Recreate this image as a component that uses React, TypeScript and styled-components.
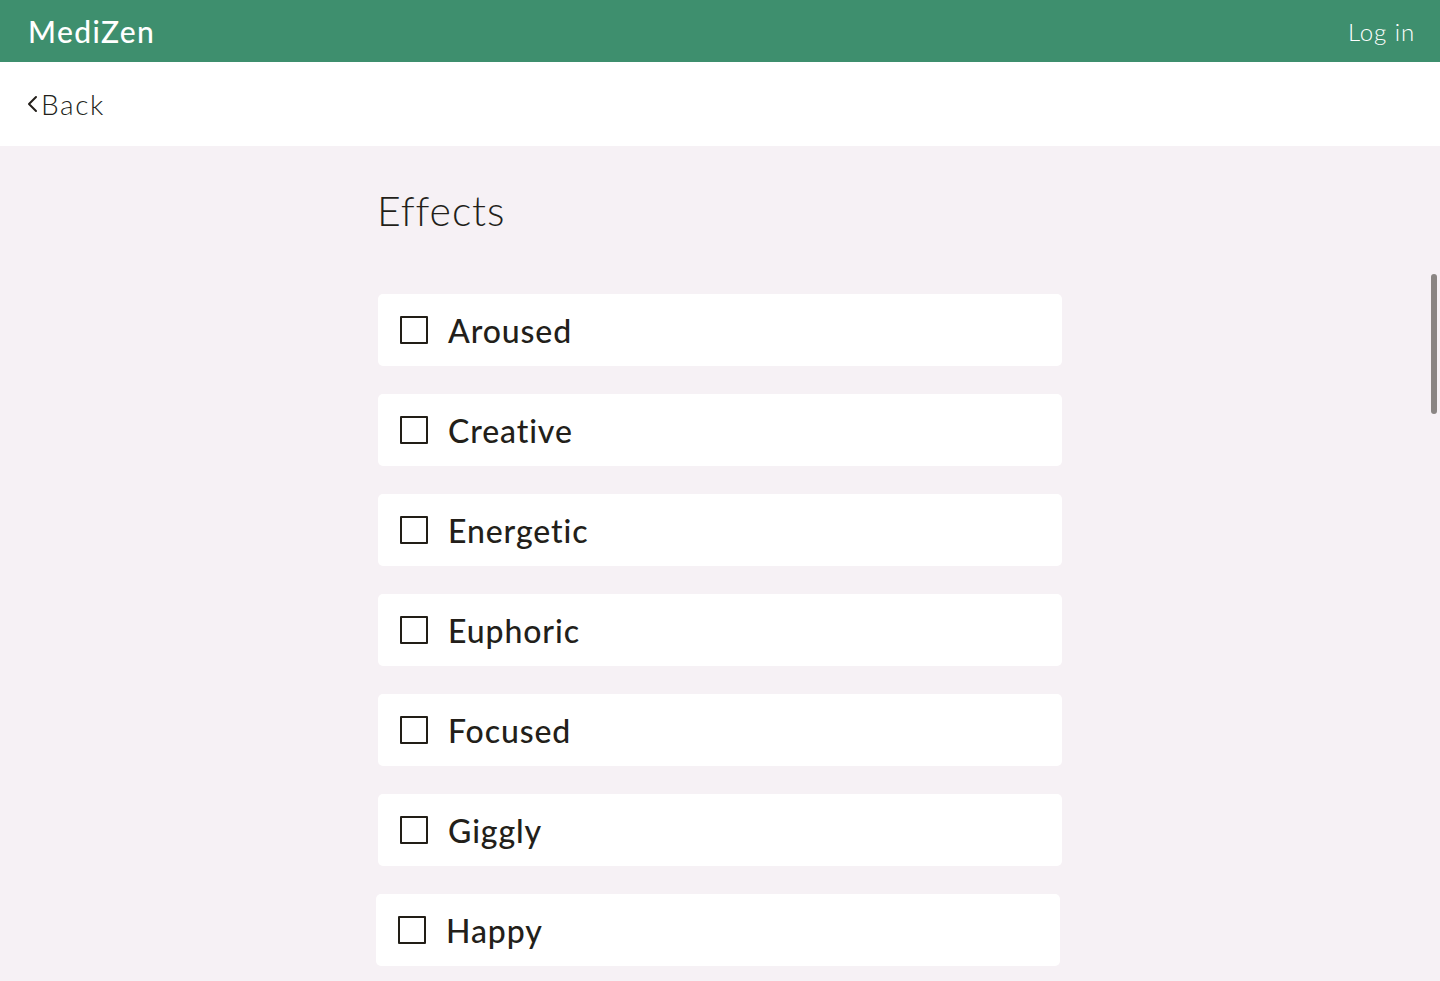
import React from "react";
import styled, { createGlobalStyle } from "styled-components";

const Global = createGlobalStyle`
  html, body { margin: 0; padding: 0; }
  body {
    background: #f6f1f5;
    font-family: "Lato", "Open Sans", sans-serif;
    color: #231f1a;
    overflow: hidden;
  }
  * { box-sizing: border-box; }
`;

const Page = styled.div`
  position: relative;
  min-height: 981px;
  display: flex;
  flex-direction: column;
`;

const Header = styled.header`
  height: 62px;
  background: #3e8f6e;
  display: flex;
  align-items: center;
  justify-content: space-between;
  padding: 0 25px 0 28px;
`;

const Logo = styled.div`
  color: #ffffff;
  font-size: 30px;
  font-weight: 500;
  letter-spacing: 1.4px;
`;

const LoginLink = styled.a`
  color: #ffffff;
  font-size: 24px;
  font-weight: 300;
  letter-spacing: 0.9px;
`;

const BackBar = styled.div`
  height: 84px;
  background: #ffffff;
  display: flex;
  align-items: center;
  padding-left: 26px;
`;

const BackLink = styled.a`
  display: flex;
  align-items: center;
  gap: 3px;
  font-size: 28px;
  font-weight: 300;
  color: #231f1a;
  letter-spacing: 1.6px;
`;

const Main = styled.main`
  width: 684px;
  margin: 0 auto;
  padding-top: 36px;
  display: flex;
  flex-direction: column;
`;

const Title = styled.h1`
  margin: 0 0 54px -1px;
  font-size: 41px;
  font-weight: 300;
  line-height: 58px;
  color: #231f1a;
  letter-spacing: 0.9px;
`;

const List = styled.div`
  display: flex;
  flex-direction: column;
  gap: 28px;
`;

const Card = styled.label<{ $shift?: number }>`
  height: 72px;
  background: #ffffff;
  border-radius: 5px;
  display: flex;
  align-items: center;
  padding-left: 22px;
  gap: 20px;
  margin-left: ${(p) => p.$shift ?? 0}px;
  margin-right: ${(p) => -(p.$shift ?? 0)}px;
  cursor: pointer;
`;

const Box = styled.span`
  width: 28px;
  height: 28px;
  border: 2px solid #221e17;
  border-radius: 1px;
  flex: none;
`;

const Label = styled.span`
  font-size: 32px;
  font-weight: 500;
  color: #231f1a;
  letter-spacing: 0.9px;
`;

const Thumb = styled.div`
  position: absolute;
  right: 3px;
  top: 274px;
  width: 6px;
  height: 140px;
  border-radius: 3px;
  background: #8a8583;
`;

const effects = ["Aroused", "Creative", "Energetic", "Euphoric", "Focused", "Giggly", "Happy"];

export default function App() {
  return (
    <Page>
      <Global />
      <Header>
        <Logo>MediZen</Logo>
        <LoginLink>Log in</LoginLink>
      </Header>
      <BackBar>
        <BackLink>
          <svg width="12" height="20" viewBox="0 0 12 20" fill="none">
            <path d="M10 3 L3 10 L10 17" stroke="#231f1a" strokeWidth="2" strokeLinecap="round" strokeLinejoin="round" />
          </svg>
          Back
        </BackLink>
      </BackBar>
      <Main>
        <Title>Effects</Title>
        <List>
          {effects.map((e, i) => (
            <Card key={e} $shift={i === 6 ? -2 : 0}>
              <Box />
              <Label>{e}</Label>
            </Card>
          ))}
        </List>
      </Main>
      <Thumb />
    </Page>
  );
}
